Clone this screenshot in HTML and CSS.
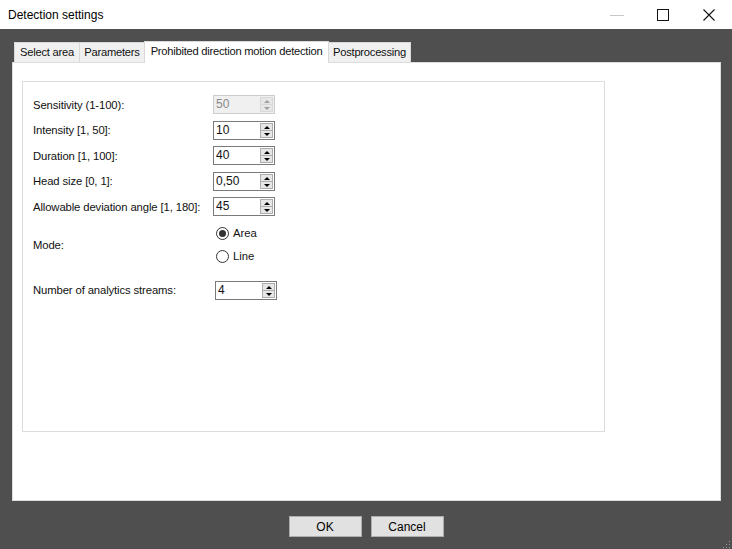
FILE: index.html
```html
<!DOCTYPE html>
<html>
<head>
<meta charset="utf-8">
<link rel="stylesheet" href="styles.css">
</head>
<body>
<div class="window">
  <div class="titlebar">
    <span class="title">Detection settings</span>
    <div class="controls">
      <span class="ctl min"><svg width="14" height="12" viewBox="0 0 14 12"><line x1="0" y1="6.5" x2="14" y2="6.5" stroke="#c8c8c8" stroke-width="1"/></svg></span>
      <span class="ctl max"><svg width="12" height="12" viewBox="0 0 12 12"><rect x="0.5" y="0.5" width="11" height="11" fill="none" stroke="#111" stroke-width="1"/></svg></span>
      <span class="ctl close"><svg width="12" height="12" viewBox="0 0 12 12"><path d="M0.5 0.5 L11.5 11.5 M11.5 0.5 L0.5 11.5" stroke="#111" stroke-width="1.1"/></svg></span>
    </div>
  </div>
  <div class="body">
    <div class="tabs">
      <div class="tab t1">Select area</div>
      <div class="tab t2">Parameters</div>
      <div class="tab active">Prohibited direction motion detection</div>
      <div class="tab t4">Postprocessing</div>
    </div>
    <div class="panel">
      <div class="group">
        <div class="row">
          <span class="label">Sensitivity (1-100):</span>
          <div class="spin disabled"><span class="val">50</span><span class="arrows"><span class="up"></span><span class="down"></span></span></div>
        </div>
        <div class="row">
          <span class="label">Intensity [1, 50]:</span>
          <div class="spin"><span class="val">10</span><span class="arrows"><span class="up"></span><span class="down"></span></span></div>
        </div>
        <div class="row">
          <span class="label">Duration [1, 100]:</span>
          <div class="spin"><span class="val">40</span><span class="arrows"><span class="up"></span><span class="down"></span></span></div>
        </div>
        <div class="row">
          <span class="label">Head size [0, 1]:</span>
          <div class="spin"><span class="val">0,50</span><span class="arrows"><span class="up"></span><span class="down"></span></span></div>
        </div>
        <div class="row">
          <span class="label">Allowable deviation angle [1, 180]:</span>
          <div class="spin"><span class="val">45</span><span class="arrows"><span class="up"></span><span class="down"></span></span></div>
        </div>
        <div class="moderow">
          <span class="label">Mode:</span>
          <div class="radios">
            <div class="radio"><span class="circle checked"></span><span>Area</span></div>
            <div class="radio"><span class="circle"></span><span>Line</span></div>
          </div>
        </div>
        <div class="row streams">
          <span class="label">Number of analytics streams:</span>
          <div class="spin"><span class="val">4</span><span class="arrows"><span class="up"></span><span class="down"></span></span></div>
        </div>
      </div>
    </div>
    <div class="buttons">
      <button class="btn">OK</button>
      <button class="btn">Cancel</button>
    </div>
    <div class="grip"></div>
  </div>
</div>
</body>
</html>
```
FILE: styles.css
```css
* { box-sizing: border-box; }
html, body { margin: 0; padding: 0; }
body {
  width: 732px;
  height: 549px;
  overflow: hidden;
  background: #4f4f4f;
  font-family: "Liberation Sans", Arial, sans-serif;
  font-size: 11.3px;
  color: #111;
}
.window { width: 732px; height: 549px; display: flex; flex-direction: column; }
.titlebar {
  height: 29px;
  background: #fff;
  display: flex;
  align-items: center;
  justify-content: space-between;
  padding-left: 8px;
}
.title { font-size: 12px; color: #000; }
.controls { display: flex; height: 29px; }
.ctl { width: 46px; height: 29px; display: flex; align-items: center; justify-content: center; }
.body {
  flex: 1;
  position: relative;
  padding: 11px 11px 0 12px;
  display: flex;
  flex-direction: column;
}
.tabs {
  display: flex;
  align-items: flex-end;
  height: 22px;
  padding-left: 2px;
  position: relative;
  z-index: 2;
}
.tab {
  height: 20px;
  background: #f0f0f0;
  border: 1px solid #d9d9d9;
  border-bottom: none;
  padding: 0 0 1px 0;
  display: flex;
  align-items: center;
  justify-content: center;
  white-space: nowrap;
  margin-right: -1px;
  font-size: 11.2px;
  letter-spacing: -0.25px;
}
.tab.active {
  height: 22px;
  background: #fff;
  border-color: #d9d9d9;
  padding: 0 0 3px 0;
  position: relative;
  top: 1px;
}
.tab.t1 { width: 66px; }
.tab.t2 { width: 66px; }
.tab.active { width: 185px; }
.tab.t4 { width: 83px; }
.panel {
  height: 439px;
  background: #fff;
  border: 1px solid #dcdcdc;
  padding: 18px 0 0 9px;
}
.group {
  width: 583px;
  height: 351px;
  border: 1px solid #dcdcdc;
  padding: 10px 0 0 10px;
}
.row {
  height: 25.5px;
  display: flex;
  align-items: center;
}
.label { width: 180px; flex: none; white-space: nowrap; letter-spacing: -0.12px; }
.spin {
  width: 62px;
  height: 19px;
  border: 1px solid #7a7a7a;
  background: #fff;
  display: flex;
  align-items: center;
  justify-content: space-between;
  padding: 0 1px 0 2px;
  font-size: 12px;
}
.spin.disabled { border-color: #cccccc; background: #f0f0f0; color: #8a8a8a; }
.val { line-height: 15px; }
.arrows {
  width: 13px;
  height: 15px;
  display: flex;
  flex-direction: column;
  border: 1px solid #adadad;
}
.spin.disabled .arrows { border-color: #d8d8d8; }
.up, .down {
  flex: 1;
  background: #e6e6e6;
  position: relative;
}
.up { border-bottom: 1px solid #adadad; }
.spin.disabled .up { border-bottom-color: #d8d8d8; }
.up::after, .down::after {
  content: "";
  position: absolute;
  left: 3px;
  width: 0; height: 0;
  border-left: 3px solid transparent;
  border-right: 3px solid transparent;
}
.up::after { top: 2px; border-bottom: 3px solid #000; }
.down::after { top: 2px; border-top: 3px solid #000; }
.spin.disabled .up::after { border-bottom-color: #a0a0a0; }
.spin.disabled .down::after { border-top-color: #a0a0a0; }
.moderow {
  display: flex;
  align-items: center;
  padding-top: 2px;
}
.radios { display: flex; flex-direction: column; padding-left: 3px; }
.radio { height: 23px; display: flex; align-items: center; }
.circle {
  width: 13px;
  height: 13px;
  border: 1px solid #333;
  border-radius: 50%;
  background: #fff;
  margin-right: 4px;
  position: relative;
}
.circle.checked::after {
  content: "";
  position: absolute;
  left: 2px; top: 2px;
  width: 7px; height: 7px;
  border-radius: 50%;
  background: #333;
}
.row.streams { margin-top: 10px; }
.row.streams .label { width: 182px; }
.buttons {
  display: flex;
  justify-content: center;
  gap: 9px;
  margin-top: 15px;
  margin-left: -12px;
  margin-right: -11px;
}
.btn {
  width: 73px;
  height: 21px;
  background: #e1e1e1;
  border: 1px solid #adadad;
  font-family: "Liberation Sans", Arial, sans-serif;
  font-size: 12px;
  padding: 0;
  color: #000;
}
.grip {
  position: absolute;
  right: 2px;
  bottom: 1px;
  width: 8px;
  height: 8px;
  background-image: radial-gradient(circle, #9a9a9a 0.8px, transparent 1px);
  background-size: 3px 3px;
  clip-path: polygon(100% 0, 100% 100%, 0 100%);
}
```
